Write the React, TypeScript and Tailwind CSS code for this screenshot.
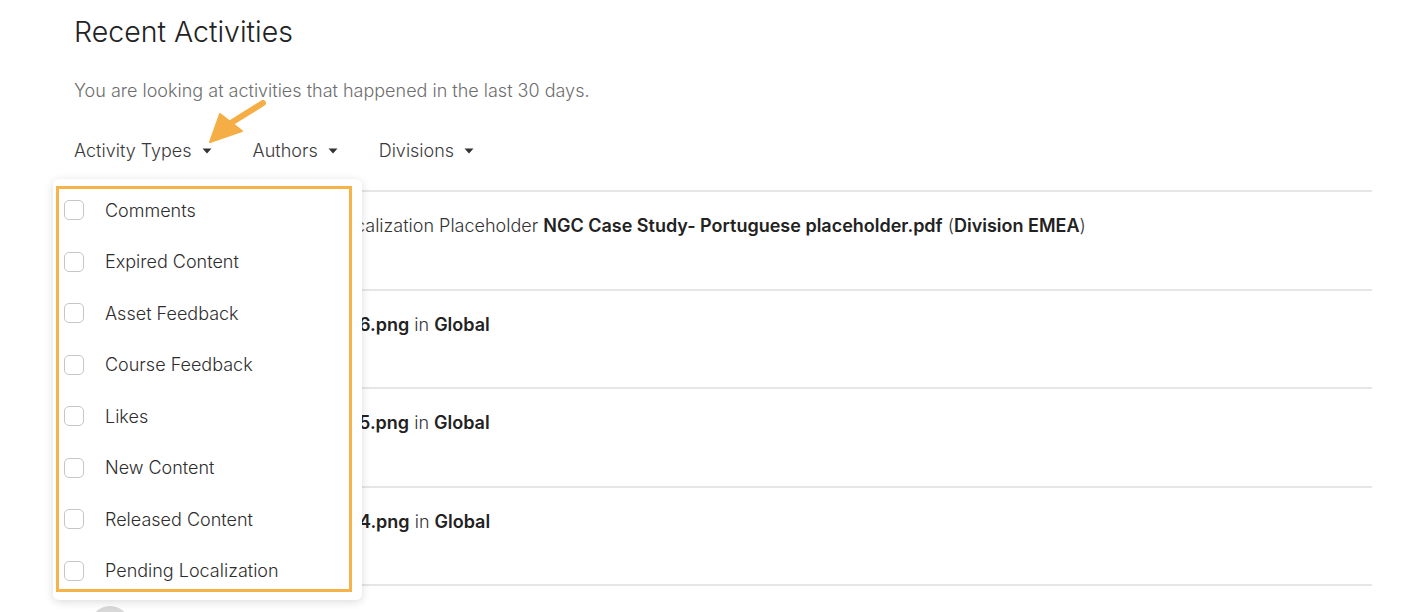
const activityTypes = [
  "Comments",
  "Expired Content",
  "Asset Feedback",
  "Course Feedback",
  "Likes",
  "New Content",
  "Released Content",
  "Pending Localization",
];

const activities = [
  {
    hidden: "Maria Santos added Lo",
    offset: "w-[209px]",
    parts: [
      { text: "calization Placeholder ", bold: false },
      { text: "NGC Case Study- Portuguese placeholder.pdf", bold: true },
      { text: " (", bold: false },
      { text: "Division EMEA", bold: true },
      { text: ")", bold: false },
    ],
  },
  {
    hidden: "Admin uploaded Image_0",
    offset: "w-[213px]",
    parts: [
      { text: "6.png", bold: true },
      { text: " in ", bold: false },
      { text: "Global", bold: true },
    ],
  },
  {
    hidden: "Admin uploaded Image_0",
    offset: "w-[213px]",
    parts: [
      { text: "5.png", bold: true },
      { text: " in ", bold: false },
      { text: "Global", bold: true },
    ],
  },
  {
    hidden: "Admin uploaded Image_0",
    offset: "w-[213px]",
    parts: [
      { text: "4.png", bold: true },
      { text: " in ", bold: false },
      { text: "Global", bold: true },
    ],
  },
];

const Caret = () => (
  <svg width="10" height="6" viewBox="0 0 10 6" className="ml-[10px] mt-[1px]">
    <path d="M0.5 0.5 L9.5 0.5 L5 5.5 Z" fill="#333" />
  </svg>
);

const FilterButton = ({ label }: { label: string }) => (
  <button className="flex items-center text-[18px] font-light text-[#3a3a3a]">
    {label}
    <Caret />
  </button>
);

const ActivityRow = ({ hidden, offset, parts }: (typeof activities)[number]) => (
  <div className="flex h-[98.5px] items-start border-t-2 border-[#e6e6e6] pt-[22px]">
    <div className="ml-[16px] h-10 w-10 shrink-0 rounded-full bg-[#d8d8d8]" />
    <div className="ml-[16px] flex text-[18px] leading-[24px] text-[#333]">
      <span className={`flex shrink-0 justify-end whitespace-nowrap ${offset}`}>{hidden}</span>
      <span className="whitespace-pre">
        {parts.map((p, i) => (
          <span key={i} className={p.bold ? "font-semibold text-[#222]" : "font-light"}>
            {p.text}
          </span>
        ))}
      </span>
    </div>
  </div>
);

const ActivityTypesMenu = () => (
  <div className="absolute left-[-21px] top-[41px] w-[309px] rounded-md bg-white pb-[8px] pl-[3px] pr-[10px] pt-[7px] shadow-[0_2px_10px_rgba(0,0,0,0.14)]">
    <div className="flex h-[406px] flex-col gap-[11.57px] border-[3px] border-[#f6b34a] pt-[1px]">
      {activityTypes.map((type) => (
        <label key={type} className="flex h-[40px] shrink-0 items-center">
          <span className="ml-[5px] h-5 w-5 rounded-[5px] border-[1.5px] border-[#c6c6c6] bg-white" />
          <span className="ml-[21px] text-[18px] font-light text-[#2e2e2e]">{type}</span>
        </label>
      ))}
    </div>
  </div>
);

const Arrow = () => (
  <svg
    className="pointer-events-none absolute left-[200px] top-[95px]"
    width="80"
    height="55"
    viewBox="200 95 80 55"
  >
    <line x1="263" y1="103" x2="226" y2="126" stroke="#f5ae45" strokeWidth="6" strokeLinecap="round" />
    <path d="M210 142 L220 114 L242 131 Z" fill="#f5ae45" stroke="#f5ae45" strokeWidth="2" strokeLinejoin="round" />
  </svg>
);

export default function App() {
  return (
    <div
      className="relative h-[612px] w-[1410px] overflow-hidden bg-white"
      style={{ fontFamily: "Inter, 'Noto Sans', sans-serif" }}
    >
      <div className="ml-[74px] mr-[38px] pt-[14px]">
        <h1 className="text-[28.5px] font-light leading-[36px] text-[#222]">Recent Activities</h1>
        <p className="mt-[29px] text-[18px] font-light leading-[24px] text-[#6e6e6e]">
          You are looking at activities that happened in the last 30 days.
        </p>

        <div className="relative mt-[35px] flex h-[24px] items-center gap-[41px]">
          <FilterButton label="Activity Types" />
          <FilterButton label="Authors" />
          <FilterButton label="Divisions" />
          <ActivityTypesMenu />
        </div>

        <div className="mt-[28px]">
          {activities.map((a, i) => (
            <ActivityRow key={i} {...a} />
          ))}
          <div className="flex border-t-2 border-[#e6e6e6] pt-[20px]">
            <div className="ml-[16px] h-10 w-10 rounded-full bg-[#d8d8d8]" />
          </div>
        </div>
      </div>
      <Arrow />
    </div>
  );
}
